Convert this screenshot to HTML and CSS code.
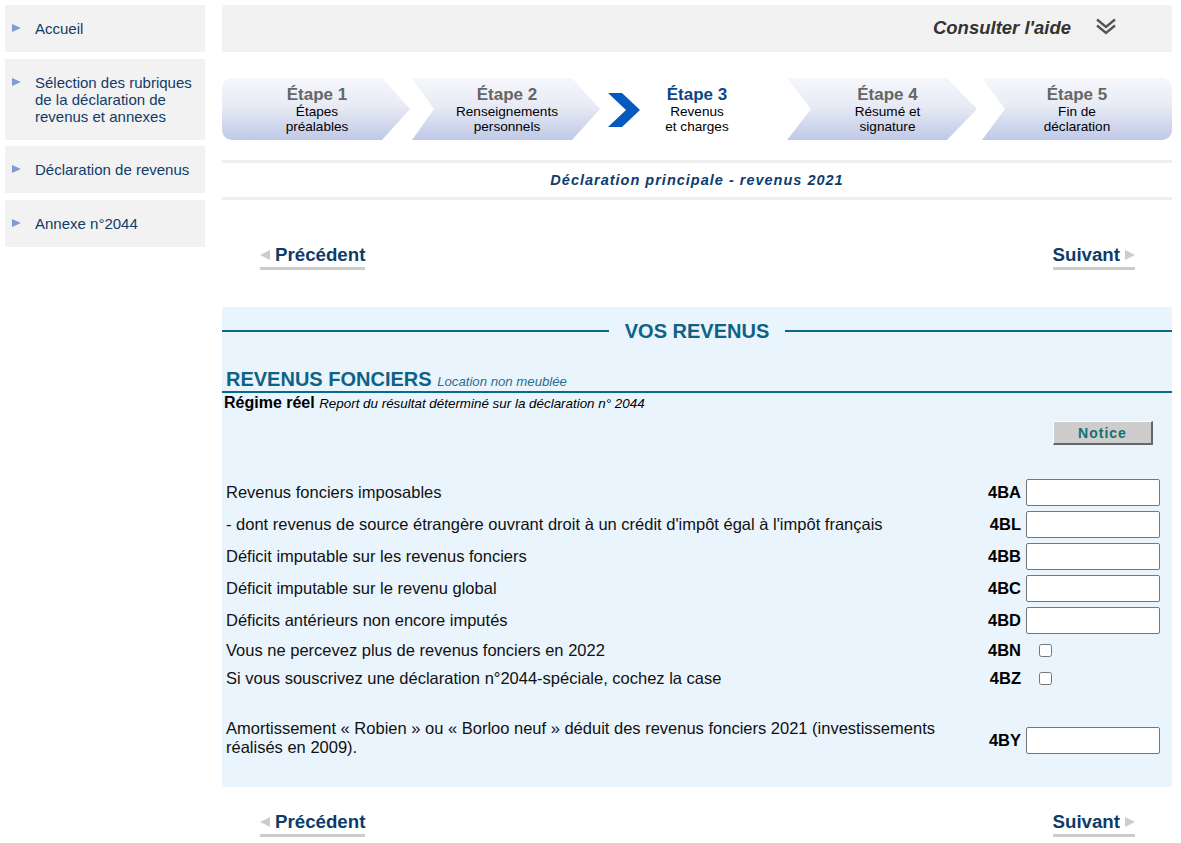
FILE: index.html
```html
<!DOCTYPE html>
<html lang="fr">
<head>
    <meta charset="UTF-8">
    <meta name="viewport" content="width=device-width, initial-scale=1.0">
    <title>Déclaration de revenus - Revenus fonciers</title>
    <link rel="stylesheet" href="styles.css">
</head>
<body>
    <div class="page">
        <nav class="sidebar">
            <a class="side-item" href="#"><span class="tri"></span><span>Accueil</span></a>
            <a class="side-item" href="#"><span class="tri"></span><span>Sélection des rubriques de la déclaration de revenus et annexes</span></a>
            <a class="side-item" href="#"><span class="tri"></span><span>Déclaration de revenus</span></a>
            <a class="side-item" href="#"><span class="tri"></span><span>Annexe n°2044</span></a>
        </nav>

        <main class="main">
            <div class="help-bar">
                <span class="help-text">Consulter l'aide</span>
                <svg class="help-icon" width="20" height="18" viewBox="0 0 20 18">
                    <polyline points="1,1.5 10,9 19,1.5" fill="none" stroke="#555" stroke-width="2.4"/>
                    <polyline points="1,7.5 10,15 19,7.5" fill="none" stroke="#555" stroke-width="2.4"/>
                </svg>
            </div>

            <div class="steps">
                <div class="step step-first">
                    <span class="step-title">Étape 1</span>
                    <span class="step-sub">Étapes<br>préalables</span>
                </div>
                <div class="step">
                    <span class="step-title">Étape 2</span>
                    <span class="step-sub">Renseignements<br>personnels</span>
                </div>
                <div class="step step-current">
                    <svg class="step-arrow" width="32" height="34" viewBox="0 0 32 34">
                        <polygon points="0,0 14,0 32,17 14,34 0,34 18,17" fill="#0659bd"/>
                    </svg>
                    <div class="step-text">
                        <span class="step-title">Étape 3</span>
                        <span class="step-sub">Revenus<br>et charges</span>
                    </div>
                </div>
                <div class="step step-wide">
                    <span class="step-title">Étape 4</span>
                    <span class="step-sub">Résumé et<br>signature</span>
                </div>
                <div class="step step-last">
                    <span class="step-title">Étape 5</span>
                    <span class="step-sub">Fin de<br>déclaration</span>
                </div>
            </div>

            <div class="decl-title">Déclaration principale - revenus 2021</div>

            <div class="nav">
                <a class="nav-link" href="#"><span class="tri-left"></span>Précédent</a>
                <a class="nav-link" href="#">Suivant<span class="tri-right"></span></a>
            </div>

            <div class="form-box">
                <h2 class="box-title">VOS REVENUS</h2>

                <h3 class="section-title">REVENUS FONCIERS <small>Location non meublée</small></h3>
                <p class="regime"><b>Régime réel</b> <i>Report du résultat déterminé sur la déclaration n° 2044</i></p>

                <div class="notice-row">
                    <button class="notice-btn">Notice</button>
                </div>

                <div class="fields">
                    <div class="field">
                        <span class="field-label">Revenus fonciers imposables</span>
                        <span class="field-code">4BA</span>
                        <input type="text">
                    </div>
                    <div class="field">
                        <span class="field-label">- dont revenus de source étrangère ouvrant droit à un crédit d'impôt égal à l'impôt français</span>
                        <span class="field-code">4BL</span>
                        <input type="text">
                    </div>
                    <div class="field">
                        <span class="field-label">Déficit imputable sur les revenus fonciers</span>
                        <span class="field-code">4BB</span>
                        <input type="text">
                    </div>
                    <div class="field">
                        <span class="field-label">Déficit imputable sur le revenu global</span>
                        <span class="field-code">4BC</span>
                        <input type="text">
                    </div>
                    <div class="field">
                        <span class="field-label">Déficits antérieurs non encore imputés</span>
                        <span class="field-code">4BD</span>
                        <input type="text">
                    </div>
                    <div class="field field-check">
                        <span class="field-label">Vous ne percevez plus de revenus fonciers en 2022</span>
                        <span class="field-code">4BN</span>
                        <input type="checkbox">
                    </div>
                    <div class="field field-check">
                        <span class="field-label">Si vous souscrivez une déclaration n°2044-spéciale, cochez la case</span>
                        <span class="field-code">4BZ</span>
                        <input type="checkbox">
                    </div>
                    <div class="field field-tall">
                        <span class="field-label">Amortissement « Robien » ou « Borloo neuf » déduit des revenus fonciers 2021 (investissements réalisés en 2009).</span>
                        <span class="field-code">4BY</span>
                        <input type="text">
                    </div>
                </div>
            </div>

            <div class="nav nav-bottom">
                <a class="nav-link" href="#"><span class="tri-left"></span>Précédent</a>
                <a class="nav-link" href="#">Suivant<span class="tri-right"></span></a>
            </div>
        </main>
    </div>
</body>
</html>
```

FILE: styles.css
```css
* {
    box-sizing: border-box;
}
body {
    margin: 0;
    font-family: "Liberation Sans", Arial, sans-serif;
    background: #fff;
    color: #111;
}
.page {
    display: flex;
    align-items: flex-start;
    gap: 17px;
    padding: 5px 0 0 5px;
}

/* menu de gauche */
.sidebar {
    width: 200px;
    flex-shrink: 0;
    display: flex;
    flex-direction: column;
    gap: 6.5px;
}
.side-item {
    display: flex;
    gap: 14px;
    padding: 15px 6px 15px 7px;
    background: #f2f2f2;
    color: #113b69;
    font-size: 15px;
    line-height: 17px;
    text-decoration: none;
}
.side-item .tri {
    flex-shrink: 0;
    width: 0;
    height: 0;
    margin-top: 4px;
    border-left: 9px solid #809ad8;
    border-top: 4.5px solid transparent;
    border-bottom: 4.5px solid transparent;
}

/* zone principale */
.main {
    width: 950px;
    flex-shrink: 0;
}
.help-bar {
    height: 47px;
    background: #f2f2f2;
    display: flex;
    justify-content: flex-end;
    align-items: center;
    gap: 25px;
    padding-right: 56px;
}
.help-text {
    margin-top: -2px;
    font-size: 18.5px;
    font-weight: bold;
    font-style: italic;
    color: #333;
}
.help-icon {
    margin-top: -4px;
}

/* étapes */
.steps {
    display: flex;
    height: 62px;
    margin-top: 26px;
}
.step {
    width: 190px;
    flex-shrink: 0;
    display: flex;
    flex-direction: column;
    justify-content: center;
    align-items: center;
    padding-top: 1px;
    text-align: center;
    background: linear-gradient(#f6f7fb, #e8ebf5 45%, #bfc9e7);
    clip-path: polygon(0 0, 160px 0, 188px 50%, 160px 100%, 0 100%, 22px 50%);
}
.step-first {
    border-radius: 10px 0 0 10px;
    clip-path: polygon(0 0, 160px 0, 188px 50%, 160px 100%, 0 100%);
}
.step-last {
    border-radius: 0 10px 10px 0;
    clip-path: polygon(0 0, 100% 0, 100% 100%, 0 100%, 23px 50%);
}
.step-wide {
    width: 195px;
    margin-left: -5px;
    padding-left: 6px;
    clip-path: polygon(0 0, 160px 0, 190px 50%, 160px 100%, 0 100%, 24px 50%);
}
.step-current {
    background: none;
    clip-path: none;
    flex-direction: row;
    padding: 1px 38px 0 6px;
}
.step-arrow {
    flex-shrink: 0;
}
.step-text {
    flex: 1;
    display: flex;
    flex-direction: column;
    align-items: center;
}
.step-title {
    font-size: 17px;
    font-weight: bold;
    line-height: 18px;
    color: #666;
}
.step-current .step-title {
    color: #0b458a;
}
.step-sub {
    font-size: 13.6px;
    line-height: 15px;
    color: #000;
}

.decl-title {
    height: 40px;
    margin-top: 20px;
    border-top: 3px solid #efefef;
    border-bottom: 3px solid #efefef;
    display: flex;
    align-items: center;
    justify-content: center;
    font-size: 14.5px;
    font-weight: bold;
    font-style: italic;
    letter-spacing: 1px;
    color: #0b3d6f;
}

/* précédent / suivant */
.nav {
    display: flex;
    justify-content: space-between;
    padding: 44px 37px 37px 38px;
}
.nav-bottom {
    padding-top: 24px;
    padding-bottom: 6px;
}
.nav-link {
    display: flex;
    align-items: center;
    gap: 5px;
    padding-bottom: 1px;
    border-bottom: 3px solid #ccc;
    font-size: 18.7px;
    font-weight: bold;
    line-height: 22px;
    color: #0d3c6a;
    text-decoration: none;
}
.tri-left, .tri-right {
    width: 0;
    height: 0;
    border-top: 5.5px solid transparent;
    border-bottom: 5.5px solid transparent;
}
.tri-left {
    border-right: 10px solid #ccc;
}
.tri-right {
    border-left: 10px solid #ccc;
}

/* formulaire */
.form-box {
    background: #eaf4fd;
    padding: 12px 0 26px;
}
.box-title {
    margin: 0;
    display: flex;
    align-items: center;
    gap: 16px;
    font-size: 20px;
    line-height: 24px;
    color: #0e6284;
}
.box-title::before, .box-title::after {
    content: "";
    flex: 1;
    height: 2px;
    background: #0a6a8b;
}
.section-title {
    margin: 24px 0 0;
    padding-left: 4px;
    border-bottom: 2px solid #0a6a8b;
    font-size: 20px;
    line-height: 24px;
    color: #0e6284;
}
.section-title small {
    font-size: 13.2px;
    line-height: 1;
    font-weight: normal;
    font-style: italic;
    color: #2b6e8e;
}
.regime {
    margin: 0;
    padding-left: 2px;
    font-size: 16px;
    line-height: 20px;
    color: #000;
}
.regime i {
    font-size: 13.4px;
    line-height: 1;
}
.notice-row {
    display: flex;
    justify-content: flex-end;
    margin-top: 8px;
    padding-right: 19px;
}
.notice-btn {
    width: 100px;
    height: 24px;
    padding: 0;
    background: #cdcdcd;
    border: 1px solid #fff;
    border-right: 2px solid #666;
    border-bottom: 2px solid #666;
    font-family: inherit;
    font-size: 14px;
    font-weight: bold;
    letter-spacing: 1px;
    color: #16706e;
}
.fields {
    margin-top: 31px;
    padding: 0 12px 0 4px;
}
.field {
    display: grid;
    grid-template-columns: 1fr 40px 134px;
    column-gap: 5px;
    align-items: center;
    height: 32px;
}
.field-check {
    height: 28px;
}
.field-tall {
    height: 42px;
    margin-top: 27px;
}
.field-tall .field-label {
    align-self: start;
}
.field-label {
    font-size: 16.5px;
    line-height: 19px;
}
.field-code {
    font-size: 16.5px;
    font-weight: bold;
    text-align: right;
    color: #000;
}
.field input[type="text"] {
    width: 134px;
    height: 27px;
    margin: 0;
    padding: 0 4px;
    background: #fff;
    border: 1px solid #767676;
    border-radius: 2px;
}
.field input[type="checkbox"] {
    justify-self: start;
    width: 13px;
    height: 13px;
    margin: 0 0 0 13px;
}
```
